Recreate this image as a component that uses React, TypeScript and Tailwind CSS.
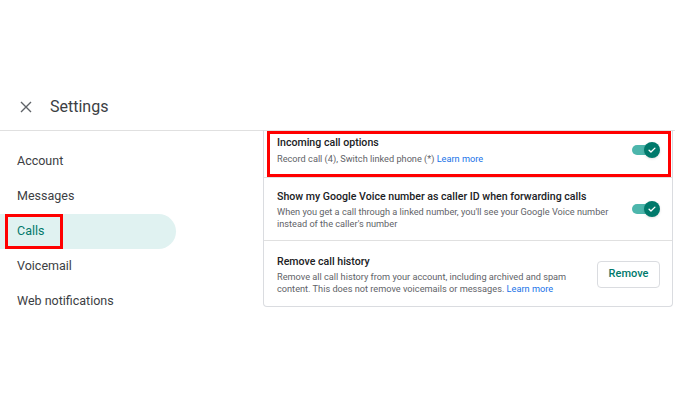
import React from 'react';

const navItems = ['Account', 'Messages', 'Calls', 'Voicemail', 'Web notifications'];

function Toggle() {
  return (
    <div className="relative w-[28px] h-[16px] flex items-center shrink-0">
      <div className="w-[24px] h-[10px] rounded-full bg-[#4db6ac]" />
      <div className="absolute right-0 top-0 w-[16px] h-[16px] rounded-full bg-[#00796b] flex items-center justify-center shadow-sm">
        <svg className="w-[10px] h-[10px]" viewBox="0 0 24 24" fill="none" stroke="white" strokeWidth={3.2} strokeLinecap="round" strokeLinejoin="round">
          <path d="M5 12.5l4.5 4.5L19 7.5" />
        </svg>
      </div>
    </div>
  );
}

export default function App() {
  return (
    <div className="w-[675px] h-[400px] bg-white overflow-hidden font-['Roboto',sans-serif]">
      <div className="pt-[83px]">
        {/* Header */}
        <div className="h-[48px] flex items-center border-b border-[#e0e0e0]">
          <svg className="ml-[20px] w-[12px] h-[12px]" viewBox="0 0 12 12" stroke="#5f6368" strokeWidth={1.4}>
            <path d="M1 1l10 10M11 1L1 11" />
          </svg>
          <span className="ml-[18px] text-[16px] text-[#3c4043]">Settings</span>
        </div>

        <div className="flex items-start">
          {/* Side nav */}
          <div className="w-[263px] pt-[13px]">
            {navItems.map((item) => {
              const active = item === 'Calls';
              return (
                <div key={item} className={`relative h-[35px] flex items-center pl-[17px] text-[12.5px] ${active ? 'w-[176px] bg-[#e0f2f1] rounded-r-full text-[#00796b]' : 'text-[#3c4043]'}`}>
                  {item}
                  {active && <div className="absolute left-[5px] top-0 w-[58px] h-[35px] border-[3px] border-[#ff0000]" />}
                </div>
              );
            })}
          </div>

          {/* Card */}
          <div className="w-[410px] border-x border-b border-[#dadce0] rounded-b-[4px] -mt-px">
            <div className="relative h-[48px] flex items-center justify-between pl-[13px] pr-[12px] pb-[8px] border-b border-[#e0e0e0]">
              <div>
                <div className="text-[10.6px] font-medium text-[#202124] leading-[15px]">Incoming call options</div>
                <div className="text-[9.2px] text-[#5f6368] leading-[13px] mt-[2px]">
                  Record call (4), Switch linked phone (*) <span className="text-[#1a73e8]">Learn more</span>
                </div>
              </div>
              <Toggle />
              <div className="absolute left-[3px] right-[1px] top-[1px] bottom-[0px] border-[3px] border-[#ff0000]" />
            </div>

            <div className="h-[63px] flex items-center justify-between pl-[13px] pr-[12px] border-b border-[#e0e0e0]">
              <div>
                <div className="text-[10.6px] font-medium text-[#202124] leading-[15px]">Show my Google Voice number as caller ID when forwarding calls</div>
                <div className="text-[9.2px] text-[#5f6368] leading-[12px] mt-[2px] w-[340px]">
                  When you get a call through a linked number, you'll see your Google Voice number instead of the caller's number
                </div>
              </div>
              <Toggle />
            </div>

            <div className="h-[65px] flex items-center justify-between pl-[13px] pr-[12px] pt-[2px]">
              <div>
                <div className="text-[10.6px] font-medium text-[#202124] leading-[15px]">Remove call history</div>
                <div className="text-[9.2px] text-[#5f6368] leading-[12px] mt-[2px] w-[300px]">
                  Remove all call history from your account, including archived and spam content. This does not remove voicemails or messages. <span className="text-[#1a73e8]">Learn more</span>
                </div>
              </div>
              <button className="w-[63px] h-[27px] border border-[#dadce0] rounded-[4px] text-[11px] font-medium text-[#00796b]">
                Remove
              </button>
            </div>
          </div>
        </div>
      </div>
    </div>
  );
}
